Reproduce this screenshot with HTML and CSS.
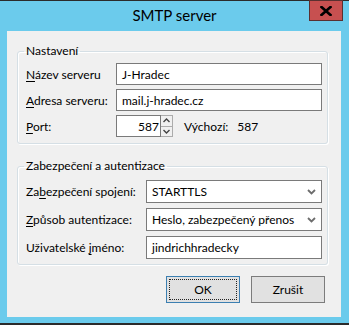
FILE: index.html
```html
<!DOCTYPE html>
<html>
<head>
<meta charset="utf-8">
<link rel="stylesheet" href="styles.css">
</head>
<body>
<div class="window">
  <div class="titlebar">
    <div class="spacer"></div>
    <div class="title">SMTP server</div>
    <div class="close">
      <svg width="12" height="10" viewBox="0 0 12 10"><path d="M1.5 1 L10.5 9 M10.5 1 L1.5 9" stroke="#000" stroke-width="2.6" stroke-linecap="square"/></svg>
    </div>
  </div>
  <div class="client">
    <fieldset class="group g1">
      <legend>Nastavení</legend>
      <div class="rows r1">
        <label class="lbl"><u>N</u>ázev serveru</label>
        <div class="field">J-Hradec</div>
        <label class="lbl"><u>A</u>dresa serveru:</label>
        <div class="field">mail.j-hradec.cz</div>
        <label class="lbl"><u>P</u>ort:</label>
        <div class="portline">
          <div class="field port">587</div>
          <div class="spin">
            <div class="spinbtn"><svg width="7" height="5" viewBox="0 0 7 5"><path d="M0.5 4 L3.5 1 L6.5 4" fill="none" stroke="#444" stroke-width="1.4"/></svg></div>
            <div class="spinbtn"><svg width="7" height="5" viewBox="0 0 7 5"><path d="M0.5 1 L3.5 4 L6.5 1" fill="none" stroke="#444" stroke-width="1.4"/></svg></div>
          </div>
          <span class="def">Výchozí:</span>
          <span class="defval">587</span>
        </div>
      </div>
    </fieldset>
    <fieldset class="group g2">
      <legend>Zabezpečení a autentizace</legend>
      <div class="rows r2">
        <label class="lbl">Za<u>b</u>ezpečení spojení:</label>
        <div class="field select"><span>STARTTLS</span><svg width="9" height="6" viewBox="0 0 9 6"><path d="M1 1 L4.5 4.5 L8 1" fill="none" stroke="#6d6d6d" stroke-width="1.8"/></svg></div>
        <label class="lbl"><u>Z</u>působ autentizace:</label>
        <div class="field select"><span>Heslo, zabezpečený přenos</span><svg width="9" height="6" viewBox="0 0 9 6"><path d="M1 1 L4.5 4.5 L8 1" fill="none" stroke="#6d6d6d" stroke-width="1.8"/></svg></div>
        <label class="lbl">Uživatelské <u>j</u>méno:</label>
        <div class="field">jindrichhradecky</div>
      </div>
    </fieldset>
    <div class="buttons">
      <button class="btn default"><span class="focus">OK</span></button>
      <button class="btn">Zrušit</button>
    </div>
  </div>
</div>
</body>
</html>
```
FILE: styles.css
```css
html, body {
  margin: 0;
  padding: 0;
}
body {
  font-family: Lato, sans-serif;
  font-size: 12px;
  color: #000;
}
.window {
  width: 349px;
  height: 325px;
  box-sizing: border-box;
  background: #6bcbec;
  border-top: 1px solid #2b2b2b;
  border-bottom: 2px solid #2b2b2b;
  display: flex;
  flex-direction: column;
}
.titlebar {
  height: 30px;
  display: grid;
  grid-template-columns: 40px 1fr 40px;
  align-items: start;
}
.title {
  text-align: center;
  font-size: 15px;
  line-height: 28px;
  color: #000;
}
.close {
  margin-top: -1px;
  width: 34px;
  height: 21px;
  box-sizing: border-box;
  background: #c75050;
  border: 1px solid #5a3030;
  display: flex;
  align-items: center;
  justify-content: center;
}
.client {
  margin: 0 8px 0 7px;
  height: 286px;
  background: #f0f0f0;
  box-sizing: border-box;
  padding: 12px 13px 0 10px;
}
.group {
  margin: 0;
  border: 1px solid #d5dfe5;
  border-radius: 3px;
  box-shadow: inset 1px 1px 0 #fff, 1px 1px 0 #fff;
  padding: 4px 5px 6px 8px;
  min-width: 0;
}
.group legend {
  padding: 0 2px;
  margin-left: -2px;
  line-height: 16px;
}
.g2 {
  margin-top: 14px;
  padding-top: 6px;
  padding-bottom: 5px;
}
.rows {
  display: grid;
  align-items: center;
}
.r1 {
  grid-template-columns: 90px 1fr;
  grid-auto-rows: 22px;
  row-gap: 4px;
}
.r2 {
  grid-template-columns: 120px 1fr;
  grid-auto-rows: 23px;
  row-gap: 5px;
}
.lbl {
  white-space: nowrap;
}
.lbl u {
  text-decoration-thickness: 1px;
  text-underline-offset: 2px;
}
.field {
  height: 100%;
  box-sizing: border-box;
  border: 1px solid #7a7a7a;
  background: #fff;
  padding: 0 5px;
  display: flex;
  align-items: center;
  white-space: nowrap;
}
.select {
  justify-content: space-between;
  padding-right: 5px;
}
.portline {
  display: flex;
  align-items: center;
  height: 100%;
}
.port {
  width: 45px;
  justify-content: flex-end;
  padding: 0 1px 0 0;
}
.spin {
  width: 12px;
  height: 100%;
  display: flex;
  flex-direction: column;
  gap: 0;
}
.spinbtn {
  flex: 1;
  border: 1px solid #acacac;
  border-left: none;
  background: #f0f0f0;
  display: flex;
  align-items: center;
  justify-content: center;
}
.spinbtn + .spinbtn {
  border-top: none;
}
.def {
  margin-left: 11px;
}
.defval {
  margin-left: 9px;
}
.buttons {
  display: flex;
  justify-content: flex-end;
  gap: 11px;
  margin-top: 11px;
  padding-right: 3px;
}
.btn {
  width: 74px;
  height: 27px;
  box-sizing: border-box;
  font: inherit;
  color: #000;
  background: #e1e1e1;
  border: 1px solid #7c7c7c;
  padding: 0;
  display: flex;
  align-items: center;
  justify-content: center;
}
.btn.default {
  border-color: #3c7fb1;
  padding: 2px;
}
.focus {
  width: 100%;
  height: 100%;
  box-sizing: border-box;
  border: 1px dotted #222;
  display: flex;
  align-items: center;
  justify-content: center;
}
```
